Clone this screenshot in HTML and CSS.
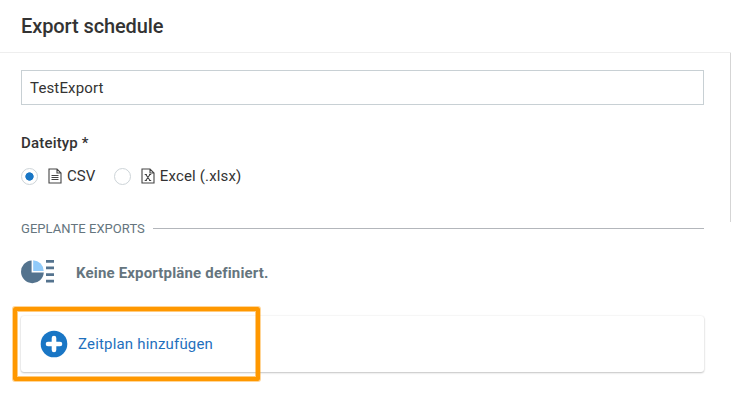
FILE: index.html
```html
<!DOCTYPE html>
<html lang="de">
<head>
<meta charset="utf-8">
<title>Export schedule</title>
<link rel="stylesheet" href="styles.css">
</head>
<body>
<header class="header"><h1 class="title">Export schedule</h1></header>
<main class="content">
  <div class="name-field">TestExport</div>
  <div class="label">Dateityp *</div>
  <div class="options">
    <div class="option">
      <span class="radio radio-on"></span>
      <svg class="file" width="14" height="16" viewBox="0 0 14 16"><path d="M1 1h8l4 4v10H1zM9 1v4h4M3.5 7.5h7M3.5 9.5h7M3.5 11.5h7"/></svg>
      <span>CSV</span>
    </div>
    <div class="option">
      <span class="radio"></span>
      <svg class="file" width="14" height="16" viewBox="0 0 14 16"><path d="M1 1h8l4 4v10H1zM9 1v4h4M4.8 6.5l4.2 6M9 6.5l-4.2 6M3.7 6.5h2.2M8 6.5h2.2M3.7 12.5h2.2M8 12.5h2.2"/></svg>
      <span class="excel">Excel (.xlsx)</span>
    </div>
  </div>
  <div class="section"><span>GEPLANTE EXPORTS</span><span class="rule"></span></div>
  <div class="empty">
    <svg width="34" height="24" viewBox="0 0 34 24"><path fill="#54738e" d="M10.6 0.4v12.2h12.2A11.4 11.4 0 1 1 10.6 0.4z"/><path fill="#90caf9" d="M12.2 0.2A10.8 10.8 0 0 1 22.7 11H12.2z"/><path fill="#54738e" d="M25 0h8v2.7h-8zM25 6.6h8v2.7h-8zM25 13.2h8v2.7h-8zM25 19.8h8v2.7h-8z"/></svg>
    <span class="empty-text">Keine Exportpläne definiert.</span>
  </div>
  <div class="card">
    <svg width="28" height="28" viewBox="0 0 28 28"><circle cx="14" cy="14" r="13.3" fill="#1976c5"/><path d="M14 8v12M8 14h12" stroke="#fff" stroke-width="4.6" stroke-linecap="round"/></svg>
    <span>Zeitplan hinzufügen</span>
    <div class="highlight"></div>
  </div>
</main>
<div class="scrollbar"></div>
</body>
</html>
```
FILE: styles.css
```css
* { box-sizing: border-box; }
body {
  margin: 0;
  height: 412px;
  overflow: hidden;
  position: relative;
  background: #fff;
  color: #333;
  font: 15px/20px Roboto, sans-serif;
}
svg { display: block; flex: none; }
.header {
  height: 53px;
  padding: 0 21px;
  border-bottom: 1px solid #eee;
  display: flex;
  align-items: center;
}
.title { margin: 0; font-size: 20px; line-height: 24px; font-weight: 500; letter-spacing: -0.1px; }
.content { padding: 17px 27px 0 21px; }
.name-field {
  height: 35px;
  padding: 0 8px;
  border: 1px solid #c8d0d4;
  line-height: 34px;
  letter-spacing: 0.15px;
}
.label { margin-top: 28px; font-weight: 500; letter-spacing: 0.18px; }
.options { display: flex; gap: 18.6px; margin-top: 13px; }
.option { display: flex; align-items: center; height: 20px; }
.excel { letter-spacing: 0.16px; }
.radio {
  width: 17px;
  height: 17px;
  border: 1px solid #cdd4d8;
  border-radius: 50%;
  background: #fff;
}
.radio-on { background: radial-gradient(circle, #1976c5 3.8px, #fff 4.5px); }
.file { margin: 0 5px 0 10px; fill: none; stroke: #444; stroke-width: 1.1; }
.section {
  display: flex;
  align-items: center;
  gap: 8px;
  height: 20px;
  margin-top: 33px;
  color: #65757e;
  font-size: 13px;
  letter-spacing: 0.05px;
}
.rule { flex: 1; height: 1px; margin-bottom: 2px; background: #b3b6bb; }
.empty {
  display: flex;
  align-items: center;
  gap: 21px;
  height: 24px;
  margin-top: 21px;
  color: #65757e;
  font-weight: 700;
  letter-spacing: 0.17px;
}
.empty-text { padding-top: 2px; }
.card {
  position: relative;
  display: flex;
  align-items: center;
  gap: 10px;
  height: 56px;
  margin-top: 32px;
  padding-left: 19px;
  border-radius: 3px;
  box-shadow: 0 1px 2px rgba(0, 0, 0, 0.22), 0 0 2px rgba(0, 0, 0, 0.1);
  color: #1f70bd;
  letter-spacing: 0.18px;
}
.highlight {
  position: absolute;
  left: -8px;
  top: -9px;
  width: 247px;
  height: 74px;
  border: 4px solid #ff9800;
  border-radius: 2px;
  box-shadow: 0 0 0 1px rgba(255, 152, 0, 0.4), inset 0 0 0 1px rgba(255, 152, 0, 0.5);
}
.scrollbar { position: absolute; left: 730px; top: 53px; width: 1px; height: 169px; background: #d5d5d5; }
```
